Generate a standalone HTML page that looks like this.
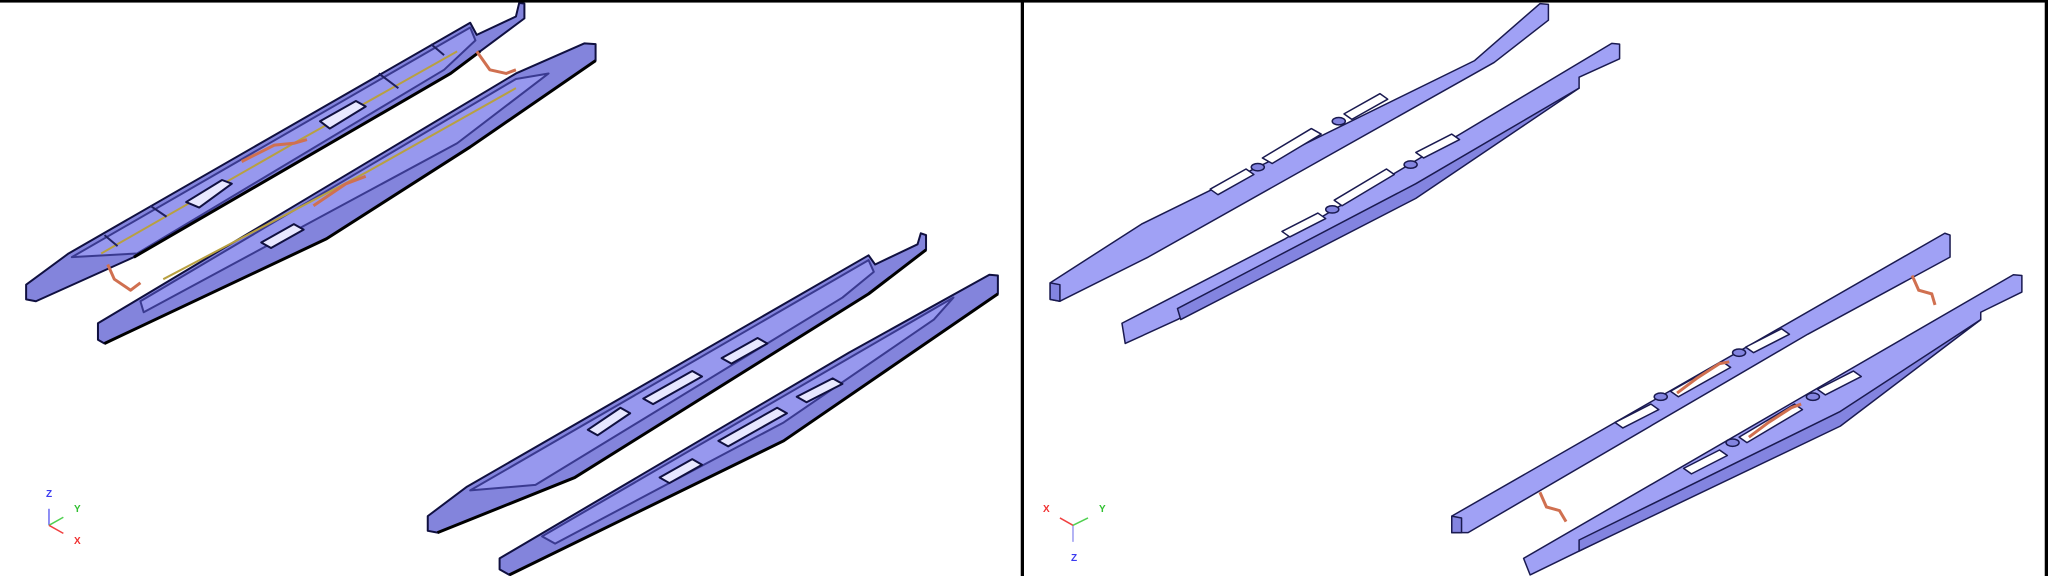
<!DOCTYPE html>
<html><head><meta charset="utf-8">
<style>
html,body{margin:0;padding:0;background:#fff;}
#wrap{position:relative;width:2048px;height:576px;overflow:hidden;background:#fff;font-family:"Liberation Sans",sans-serif;}
svg{position:absolute;top:0;}
.lbl{position:absolute;font-size:10px;font-weight:bold;line-height:10px;}
</style></head><body>
<div id="wrap">
<svg style="left:0" width="1024" height="576" viewBox="0 0 1568 1568" preserveAspectRatio="none">
 <g stroke="#101040" stroke-width="2" vector-effect="non-scaling-stroke" stroke-linejoin="round">
  <!-- Bar A -->
  <polygon points="40,775 105,690 720,62 730,95 790,45 795,8 803,10 803,50 735,140 690,200 205,700 55,820 40,815" fill="#8384dc" vector-effect="non-scaling-stroke"/>
  <polygon points="110,700 720,75 728,110 680,190 210,690" fill="#9798ee" stroke="#3a3a90" vector-effect="non-scaling-stroke"/>
  <polyline points="155,690 450,390 700,140" fill="none" stroke="#b8a040" vector-effect="non-scaling-stroke"/>
  <polyline points="205,700 690,200 735,140" fill="none" stroke="#000" stroke-width="3" vector-effect="non-scaling-stroke"/>
  <polygon points="285,550 340,490 355,500 305,565" fill="#e8e8ff" vector-effect="non-scaling-stroke"/>
  <polygon points="490,330 545,275 560,290 505,350" fill="#e8e8ff" vector-effect="non-scaling-stroke"/>
  <path d="M160,640 l20,30 M230,560 l25,30 M580,200 l30,40 M660,120 l20,30" stroke="#202060" vector-effect="non-scaling-stroke"/>
  <polyline points="370,440 420,395 450,390 470,380" fill="none" stroke="#d07050" stroke-width="3" vector-effect="non-scaling-stroke"/>
  <polyline points="165,720 175,760 200,790 215,770" fill="none" stroke="#d07050" stroke-width="3" vector-effect="non-scaling-stroke"/>
  <polyline points="730,140 750,190 775,200 790,190" fill="none" stroke="#d07050" stroke-width="3" vector-effect="non-scaling-stroke"/>
  <!-- Bar B -->
  <polygon points="150,880 790,200 895,118 912,120 912,165 720,400 500,650 160,935 150,925" fill="#8384dc" vector-effect="non-scaling-stroke"/>
  <polygon points="215,820 790,215 840,200 700,390 220,850" fill="#9798ee" stroke="#3a3a90" vector-effect="non-scaling-stroke"/>
  <polyline points="250,760 560,470 790,240" fill="none" stroke="#b8a040" vector-effect="non-scaling-stroke"/>
  <polyline points="160,935 500,650 720,400 912,165" fill="none" stroke="#000" stroke-width="3" vector-effect="non-scaling-stroke"/>
  <polygon points="400,660 450,610 465,625 415,675" fill="#e8e8ff" vector-effect="non-scaling-stroke"/>
  <polyline points="480,560 530,500 560,480" fill="none" stroke="#d07050" stroke-width="3" vector-effect="non-scaling-stroke"/>
  <!-- Bar C -->
  <polygon points="655,1405 715,1325 1330,695 1340,720 1405,665 1410,635 1418,640 1418,680 1330,800 1240,900 880,1300 670,1450 655,1445" fill="#8384dc" vector-effect="non-scaling-stroke"/>
  <polygon points="720,1335 1330,708 1338,740 1290,810 820,1320" fill="#9798ee" stroke="#3a3a90" vector-effect="non-scaling-stroke"/>
  <polyline points="670,1450 880,1300 1240,900 1330,800 1418,680" fill="none" stroke="#000" stroke-width="3" vector-effect="non-scaling-stroke"/>
  <polygon points="900,1170 950,1110 965,1125 915,1185" fill="#e8e8ff" vector-effect="non-scaling-stroke"/>
  <polygon points="985,1085 1060,1010 1075,1025 1000,1100" fill="#e8e8ff" vector-effect="non-scaling-stroke"/>
  <polygon points="1105,975 1160,920 1175,935 1120,990" fill="#e8e8ff" vector-effect="non-scaling-stroke"/>
  <!-- Bar D -->
  <polygon points="765,1520 1300,960 1515,748 1528,750 1528,800 1200,1200 780,1565 765,1550" fill="#8384dc" vector-effect="non-scaling-stroke"/>
  <polygon points="830,1460 1300,975 1460,810 1430,870 1200,1150 850,1480" fill="#9798ee" stroke="#3a3a90" vector-effect="non-scaling-stroke"/>
  <polyline points="780,1565 1200,1200 1528,800" fill="none" stroke="#000" stroke-width="3" vector-effect="non-scaling-stroke"/>
  <polygon points="1010,1300 1060,1250 1075,1265 1025,1315" fill="#e8e8ff" vector-effect="non-scaling-stroke"/>
  <polygon points="1100,1200 1190,1110 1205,1125 1115,1215" fill="#e8e8ff" vector-effect="non-scaling-stroke"/>
  <polygon points="1220,1080 1275,1030 1290,1045 1235,1095" fill="#e8e8ff" vector-effect="non-scaling-stroke"/>
 </g>
 <line x1="75" y1="1385" x2="75" y2="1430" stroke="#6a6af0" stroke-width="1.5" vector-effect="non-scaling-stroke"/>
 <line x1="75" y1="1430" x2="97" y2="1408" stroke="#50d050" stroke-width="1.5" vector-effect="non-scaling-stroke"/>
 <line x1="75" y1="1430" x2="97" y2="1452" stroke="#f04040" stroke-width="1.5" vector-effect="non-scaling-stroke"/>
 <rect x="1563" y="0" width="5" height="1568" fill="#000"/>
 <rect x="0" y="0" width="1568" height="7" fill="#000"/>
</svg>
<svg style="left:1024px" width="1024" height="576" viewBox="0 0 1568 1568" preserveAspectRatio="none">
 <g stroke="#1a1a50" stroke-width="1.5" stroke-linejoin="round">
  <polygon points="40,770 180,610 690,165 790,10 803,12 803,55 720,170 190,700 55,820 40,815" fill="#a0a1f5" vector-effect="non-scaling-stroke"/>
  <polygon points="40,770 55,775 55,820 40,815" fill="#8384e0" vector-effect="non-scaling-stroke"/>
  <polygon points="285,515 340,460 352,475 297,530" fill="#fff" vector-effect="non-scaling-stroke"/>
  <polygon points="365,430 440,350 455,365 380,445" fill="#fff" vector-effect="non-scaling-stroke"/>
  <polygon points="490,310 545,255 557,270 502,325" fill="#fff" vector-effect="non-scaling-stroke"/>
  <circle cx="358" cy="455" r="10" fill="#8384e0" vector-effect="non-scaling-stroke"/>
  <circle cx="482" cy="330" r="10" fill="#8384e0" vector-effect="non-scaling-stroke"/>
  <polygon points="150,880 400,650 900,118 912,120 912,160 850,210 850,240 600,520 235,870 155,935" fill="#a0a1f5" vector-effect="non-scaling-stroke"/>
  <polygon points="235,840 600,500 850,240 600,540 240,870" fill="#8384e0" vector-effect="non-scaling-stroke"/>
  <polygon points="395,630 450,580 462,595 407,645" fill="#fff" vector-effect="non-scaling-stroke"/>
  <polygon points="475,545 555,460 567,475 487,560" fill="#fff" vector-effect="non-scaling-stroke"/>
  <polygon points="600,415 655,365 667,380 612,430" fill="#fff" vector-effect="non-scaling-stroke"/>
  <circle cx="472" cy="570" r="10" fill="#8384e0" vector-effect="non-scaling-stroke"/>
  <circle cx="592" cy="448" r="10" fill="#8384e0" vector-effect="non-scaling-stroke"/>
  <polygon points="655,1405 1410,635 1418,640 1418,700 1200,910 680,1450 655,1450" fill="#a0a1f5" vector-effect="non-scaling-stroke"/>
  <polygon points="655,1405 670,1410 670,1450 655,1450" fill="#8384e0" vector-effect="non-scaling-stroke"/>
  <polygon points="905,1150 960,1100 972,1115 917,1165" fill="#fff" vector-effect="non-scaling-stroke"/>
  <polygon points="990,1065 1070,985 1082,1000 1002,1080" fill="#fff" vector-effect="non-scaling-stroke"/>
  <polygon points="1105,945 1160,895 1172,910 1117,960" fill="#fff" vector-effect="non-scaling-stroke"/>
  <circle cx="975" cy="1080" r="10" fill="#8384e0" vector-effect="non-scaling-stroke"/>
  <circle cx="1095" cy="960" r="10" fill="#8384e0" vector-effect="non-scaling-stroke"/>
  <polygon points="765,1520 1515,748 1528,750 1528,795 1465,850 1465,870 1250,1150 850,1500 775,1565" fill="#a0a1f5" vector-effect="non-scaling-stroke"/>
  <polygon points="850,1470 1250,1120 1465,870 1250,1160 850,1500" fill="#8384e0" vector-effect="non-scaling-stroke"/>
  <polygon points="1010,1275 1065,1225 1077,1240 1022,1290" fill="#fff" vector-effect="non-scaling-stroke"/>
  <polygon points="1095,1190 1180,1100 1192,1115 1107,1205" fill="#fff" vector-effect="non-scaling-stroke"/>
  <polygon points="1215,1060 1270,1010 1282,1025 1227,1075" fill="#fff" vector-effect="non-scaling-stroke"/>
  <circle cx="1085" cy="1205" r="10" fill="#8384e0" vector-effect="non-scaling-stroke"/>
  <circle cx="1208" cy="1080" r="10" fill="#8384e0" vector-effect="non-scaling-stroke"/>
 </g>
 <g fill="none" stroke="#d07050" stroke-width="3">
  <polyline points="1000,1070 1030,1030 1065,990 1080,985" vector-effect="non-scaling-stroke"/>
  <polyline points="1110,1190 1140,1150 1175,1110 1190,1100" vector-effect="non-scaling-stroke"/>
  <polyline points="790,1340 800,1380 820,1390 830,1420" vector-effect="non-scaling-stroke"/>
  <polyline points="1360,750 1370,790 1390,800 1395,830" vector-effect="non-scaling-stroke"/>
 </g>
 <line x1="75" y1="1430" x2="75" y2="1475" stroke="#9a9af0" stroke-width="1.5" vector-effect="non-scaling-stroke"/>
 <line x1="75" y1="1430" x2="55" y2="1410" stroke="#f04040" stroke-width="1.5" vector-effect="non-scaling-stroke"/>
 <line x1="75" y1="1430" x2="98" y2="1410" stroke="#50d050" stroke-width="1.5" vector-effect="non-scaling-stroke"/>
 <rect x="1563" y="0" width="5" height="1568" fill="#000"/>
 <rect x="0" y="0" width="1568" height="7" fill="#000"/>
</svg>
<div class="lbl" style="left:46px;top:490px;color:#3a3af0">Z</div>
<div class="lbl" style="left:74px;top:505px;color:#30c030">Y</div>
<div class="lbl" style="left:74px;top:537px;color:#f03030">X</div>
<div class="lbl" style="left:1043px;top:505px;color:#f03030">X</div>
<div class="lbl" style="left:1099px;top:505px;color:#30c030">Y</div>
<div class="lbl" style="left:1071px;top:554px;color:#3a3af0">Z</div>
</div>
</body></html>
